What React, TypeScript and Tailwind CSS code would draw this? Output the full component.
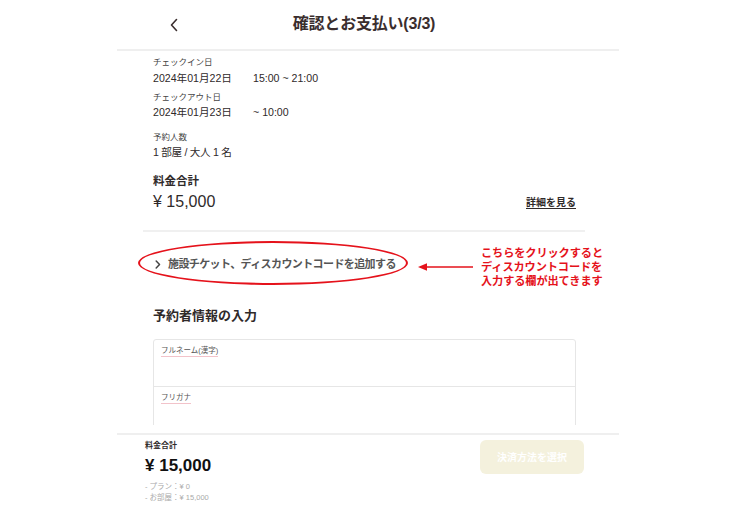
import React from "react";

const font = { fontFamily: '"Liberation Sans", "Noto Sans CJK JP", sans-serif' };

const App: React.FC = () => {
  return (
    <div className="w-full h-[510px] bg-white flex justify-center overflow-hidden text-[#2f2a2a]" style={font}>
      <div className="w-[502px] flex flex-col">
        {/* header */}
        <div className="h-[51px] border-b-2 border-[#efefef] flex items-center relative shrink-0">
          <svg className="absolute left-[52px] top-[18px]" width="10" height="14" viewBox="0 0 10 14" fill="none">
            <path d="M7.5 1.5L2.5 7l5 5.5" stroke="#3a2e2e" strokeWidth="1.6" strokeLinecap="round" strokeLinejoin="round" />
          </svg>
          <h1 className="w-full text-center text-[16px] font-bold text-[#3a2e2e] tracking-[-0.2px] pr-[8px] pb-[2px]">
            確認とお支払い(3/3)
          </h1>
        </div>

        {/* scroll area */}
        <div className="h-[374px] overflow-hidden pl-[36px] pr-[43px] shrink-0">
          <p className="mt-[5px] text-[8.5px] leading-[12px] text-[#444]">チェックイン日</p>
          <div className="mt-[2px] flex text-[10.6px] leading-[16px]">
            <span className="w-[100px]">2024年01月22日</span>
            <span>15:00 ~ 21:00</span>
          </div>
          <p className="mt-[5px] text-[8.5px] leading-[12px] text-[#444]">チェックアウト日</p>
          <div className="mt-[1px] flex text-[10.6px] leading-[16px]">
            <span className="w-[100px]">2024年01月23日</span>
            <span>~ 10:00</span>
          </div>
          <p className="mt-[11px] text-[8.5px] leading-[12px] text-[#444]">予約人数</p>
          <p className="mt-[1px] text-[10.6px] leading-[16px] tracking-[-0.3px]">1 部屋 / 大人 1 名</p>

          <p className="mt-[12px] text-[11.5px] leading-[18px] font-bold">料金合計</p>
          <div className="mt-[1px] flex items-center justify-between">
            <span className="text-[16px] leading-[22px]">¥ 15,000</span>
            <span className="text-[10px] leading-[14px] font-bold underline underline-offset-2 mt-[2px]">詳細を見る</span>
          </div>
          <div className="mt-[17px] h-[2px] bg-[#f0f0f0] -ml-[10px] -mr-[9px]" />

          {/* discount code row with annotation */}
          <div className="relative h-[71px] pt-[24px]">
            <div className="flex items-center gap-[7px] text-[11px] leading-[16px] font-bold text-[#555] tracking-[-0.6px]">
              <svg width="6" height="9" viewBox="0 0 6 9" fill="none" className="ml-[2px]">
                <path d="M1.2 1l3.3 3.5L1.2 8" stroke="#444" strokeWidth="1.5" strokeLinecap="round" strokeLinejoin="round" />
              </svg>
              <span>施設チケット、ディスカウントコードを追加する</span>
            </div>
            <div className="absolute left-[-15px] top-[9px] w-[270px] h-[44px] rounded-[50%] border-2 border-[#e5121b]" />
            <svg className="absolute left-[264px] top-[30px]" width="57" height="10" viewBox="0 0 57 10">
              <path d="M9 5H56" stroke="#e5121b" strokeWidth="1.6" />
              <path d="M1 5L10 1.2V8.8Z" fill="#e5121b" />
            </svg>
            <div className="absolute left-[328px] top-[14px] w-[140px] text-[11.2px] leading-[14px] font-bold text-[#e5121b] tracking-[-0.1px]">
              <p>こちらをクリックすると</p>
              <p>ディスカウントコードを</p>
              <p>入力する欄が出てきます</p>
            </div>
          </div>

          <h2 className="mt-[2px] text-[13px] leading-[22px] font-bold">予約者情報の入力</h2>

          <div className="mt-[12px] border border-[#e6e6e6] rounded-[3px]">
            <div className="h-[47px] border-b border-[#e6e6e6] px-[7px] pt-[5px] leading-none">
              <p className="w-fit text-[7.5px] leading-[11px] text-[#555] border-b border-[#f2c3ca]">フルネーム(漢字)</p>
            </div>
            <div className="h-[47px] px-[7px] pt-[5px] leading-none">
              <p className="w-fit text-[7.5px] leading-[11px] text-[#555] border-b border-[#f2c3ca]">フリガナ</p>
            </div>
          </div>
        </div>

        {/* bottom bar */}
        <div className="mt-[8px] border-t-2 border-[#efefef] pl-[28px] pr-[35px] flex justify-between shrink-0">
          <div>
            <p className="mt-[5px] text-[8px] leading-[12px] font-bold">料金合計</p>
            <p className="mt-[3px] text-[17px] leading-[22px] font-bold text-[#111]">¥ 15,000</p>
            <p className="mt-[4px] text-[7.5px] leading-[11px] text-[#aaa]">- プラン：¥ 0</p>
            <p className="text-[7.5px] leading-[11px] text-[#aaa]">- お部屋：¥ 15,000</p>
          </div>
          <button className="mt-[5px] w-[104px] h-[34px] rounded-[6px] bg-[#f4f1dd] text-white text-[10px] font-bold">
            決済方法を選択
          </button>
        </div>
      </div>
    </div>
  );
};

export default App;
